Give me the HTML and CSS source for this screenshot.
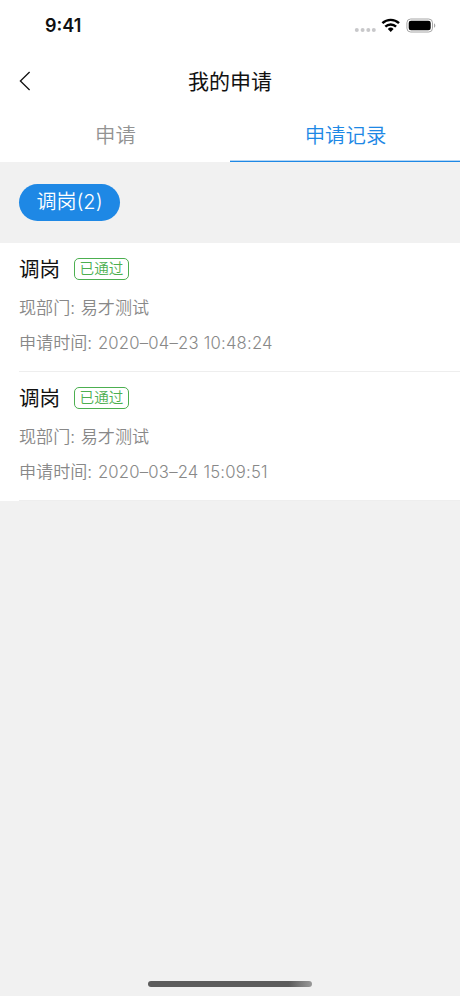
FILE: index.html
```
<!DOCTYPE html>
<html lang="zh-CN">
<head>
  <meta charset="UTF-8">
  <meta name="viewport" content="width=device-width, initial-scale=1">
  <title>我的申请</title>
  <link rel="stylesheet" href="styles.css">
</head>
<body>

  <div class="status-bar">
    <span class="hora">9:41</span>
    <svg class="status-icons" width="84" height="20" viewBox="0 0 84 20">
      <g fill="#c8c8ca">
        <circle cx="3.8" cy="14" r="2"/>
        <circle cx="9.6" cy="14" r="2"/>
        <circle cx="15.3" cy="14" r="2"/>
        <circle cx="20.8" cy="14" r="2"/>
      </g>
      <g fill="none" stroke="#000" stroke-width="2.4">
        <path d="M29.4 7.2a12 12 0 0 1 16.6 0"/>
        <path d="M32.3 10.6a7.8 7.8 0 0 1 10.8 0"/>
      </g>
      <path d="M34.8 12.9a4.3 4.3 0 0 1 5.8 0l-2.9 3z"/>
      <rect x="53.9" y="3" width="25.6" height="13" rx="3.8" fill="none" stroke="#a6a6a6"/>
      <rect x="55.7" y="4.8" width="22" height="9.4" rx="2.3"/>
      <path d="M81 7.2v4.6c1.8-.8 1.8-3.8 0-4.6z" fill="#a6a6a6"/>
    </svg>
  </div>

  <header class="navbar">
    <svg class="back" width="12" height="20" viewBox="0 0 12 20">
      <path d="M10.6 1L1.4 10l9.2 9" fill="none" stroke="#111" stroke-width="1.3"/>
    </svg>
    <h1>我的申请</h1>
  </header>

  <nav class="tabs">
    <a class="tab">申请</a>
    <a class="tab active">申请记录</a>
  </nav>

  <div class="filtros">
    <button class="pill">调岗(2)</button>
  </div>

  <main class="lista">
    <section class="registro">
      <div class="titulo">
        <h2>调岗</h2>
        <span class="badge">已通过</span>
      </div>
      <p>现部门: 易才测试</p>
      <p>申请时间: <span class="fecha">2020–04–23 10:48:24</span></p>
    </section>
    <section class="registro">
      <div class="titulo">
        <h2>调岗</h2>
        <span class="badge">已通过</span>
      </div>
      <p>现部门: 易才测试</p>
      <p>申请时间: <span class="fecha">2020–03–24 15:09:51</span></p>
    </section>
  </main>

  <div class="home-indicator"></div>

</body>
</html>
```

FILE: styles.css
```
* {
  margin: 0;
  padding: 0;
  box-sizing: border-box;
}

body {
  display: flex;
  flex-direction: column;
  height: 996px;
  overflow: hidden;
  font-family: "Liberation Sans", "Noto Sans CJK SC", sans-serif;
  background-color: #f1f1f1;
  color: #111;
}

.status-bar {
  display: flex;
  justify-content: space-between;
  height: 52px;
  padding: 16px 23px 0 45px;
  background-color: white;
}

.hora {
  font-family: Inter, sans-serif;
  font-size: 18px;
  font-weight: 600;
  line-height: 20px;
}

.navbar {
  display: flex;
  align-items: center;
  height: 58px;
  padding: 0 19px;
  background-color: white;
}

.navbar h1 {
  flex: 1;
  padding: 0 12px 2px 0;
  font-size: 21px;
  font-weight: 400;
  text-align: center;
}

.tabs {
  display: flex;
  height: 52px;
  background-color: white;
}

.tab {
  flex: 1;
  height: 52px;
  padding-left: 1px;
  font-size: 20.4px;
  font-weight: 350;
  line-height: 53px;
  text-align: center;
  color: #939393;
}

.tab.active {
  color: #1e88e5;
  background: linear-gradient(#b5d6f4 50%, #1e88e5 50%) bottom / 100% 2px no-repeat;
}

.filtros {
  height: 81px;
  padding: 22px 19px 0;
}

.pill {
  display: block;
  width: 101px;
  height: 37px;
  border: none;
  border-radius: 19px;
  background-color: #1e88e5;
  color: white;
  font-family: Inter, "Noto Sans CJK SC", sans-serif;
  font-size: 20px;
  font-weight: 350;
  line-height: 37px;
}

.lista {
  background-color: white;
}

.registro {
  height: 129px;
  margin-left: 19px;
  padding-top: 11px;
  border-bottom: 1px solid #eee;
}

.titulo {
  display: flex;
  align-items: center;
  gap: 14px;
  height: 30px;
}

.titulo h2 {
  padding-bottom: 2px;
  font-size: 20.5px;
  font-weight: 400;
}

.badge {
  width: 55px;
  height: 22px;
  border: 1.3px solid #4caf50;
  border-radius: 5px;
  font-size: 14.6px;
  font-weight: 350;
  line-height: 21px;
  text-align: center;
  color: #4caf50;
}

.registro p {
  height: 36px;
  padding-top: 7px;
  font-size: 17.1px;
  font-weight: 350;
  line-height: 36px;
  word-spacing: 1px;
  color: #888;
}

.registro p + p {
  padding-top: 5px;
}

.fecha {
  font-family: Inter, sans-serif;
  font-size: 16.7px;
  letter-spacing: 0.2px;
  word-spacing: 0;
}

.home-indicator {
  width: 164px;
  height: 6px;
  margin: auto auto 9px;
  border-radius: 3px;
  background: linear-gradient(to right, #5c5c5c 86%, #999);
}
```
